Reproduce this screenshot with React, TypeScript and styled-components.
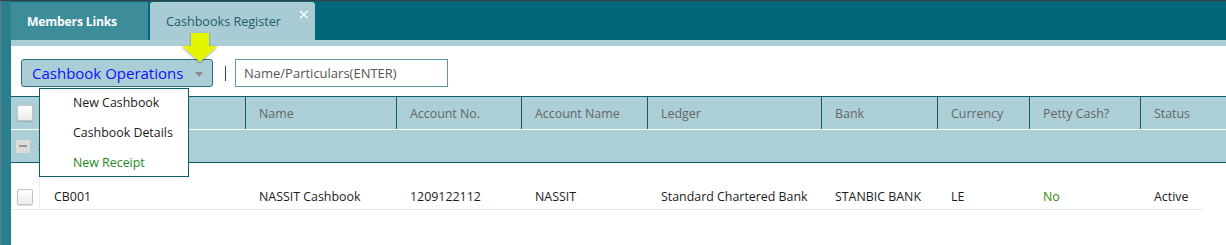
import React from "react";
import styled, { createGlobalStyle } from "styled-components";

const GlobalStyle = createGlobalStyle`
  html, body {
    margin: 0;
    padding: 0;
    background: #ffffff;
    font-family: "Open Sans", "Liberation Sans", sans-serif;
    overflow: hidden;
  }
`;

const COLS = "29px 205px 151px 125px 126px 174px 116px 92px 111px 1fr";

const Page = styled.div`
  width: 1226px;
  height: 245px;
  border-top: 1px solid #3b3f40;
  box-sizing: border-box;
  display: flex;
`;

const Rail = styled.div`
  width: 11px;
  flex: none;
  background: #2a7f8e;
  border-left: 1px solid #5f7f85;
  box-sizing: border-box;
`;

const Main = styled.div`
  flex: 1;
  display: flex;
  flex-direction: column;
  min-width: 0;
`;

const TabBar = styled.div`
  height: 39px;
  background: #02677a;
  display: flex;
  align-items: flex-end;
  gap: 2px;
`;

const Tab = styled.div<{ active?: boolean }>`
  position: relative;
  height: 38px;
  box-sizing: border-box;
  width: ${(p) => (p.active ? "165px" : "137px")};
  display: flex;
  align-items: center;
  padding-left: 16px;
  border-radius: ${(p) => (p.active ? "3px 3px 0 0" : "0")};
  background: ${(p) => (p.active ? "#a9cbd3" : "#3d8c99")};
  color: ${(p) => (p.active ? "#1d5f6d" : "#ffffff")};
  font-weight: ${(p) => (p.active ? 400 : 700)};
  font-size: ${(p) => (p.active ? "12.6px" : "12.2px")};
  letter-spacing: ${(p) => (p.active ? "0" : "-0.2px")};
`;

const Close = styled.span`
  position: absolute;
  right: 6px;
  top: 3px;
  color: #ffffff;
  font-size: 19px;
  line-height: 19px;
`;

const Strip = styled.div`
  height: 6px;
  background: #abcdd5;
`;

const Content = styled.div`
  flex: 1;
  background: #ffffff;
`;

const Toolbar = styled.div`
  display: flex;
  align-items: center;
  padding: 13px 0 0 10px;
  height: 28px;
`;

const OpsWrap = styled.div`
  position: relative;
`;

const OpsButton = styled.div`
  width: 192px;
  height: 28px;
  box-sizing: border-box;
  border: 1px solid #2a6f7e;
  border-radius: 3px;
  background: #abcdd6;
  display: flex;
  align-items: center;
  justify-content: space-between;
  padding: 0 9px 0 10px;
  color: #1010ff;
  font-size: 15px;
`;

const Caret = styled.span`
  width: 0;
  height: 0;
  border-left: 4px solid transparent;
  border-right: 4px solid transparent;
  border-top: 5px solid #8a8a8a;
  margin-top: 2px;
`;

const Pointer = styled.svg`
  position: absolute;
  left: 159px;
  top: -28px;
  z-index: 3;
`;

const Menu = styled.div`
  position: absolute;
  left: 18px;
  top: 29px;
  width: 150px;
  height: 89px;
  box-sizing: border-box;
  border: 1px solid #0e5b69;
  background: #ffffff;
  z-index: 2;
  overflow: hidden;
`;

const MenuItem = styled.div<{ accent?: boolean }>`
  height: 30px;
  line-height: 28px;
  padding-left: 33px;
  font-size: 12.4px;
  color: ${(p) => (p.accent ? "#1c8a22" : "#1b1b1b")};
`;

const Divider = styled.div`
  width: 1px;
  height: 15px;
  background: #2b4a50;
  margin: 0 9px 0 12px;
`;

const Search = styled.div`
  width: 213px;
  height: 28px;
  box-sizing: border-box;
  border: 1px solid #5b9aa5;
  display: flex;
  align-items: center;
  padding-left: 8px;
  color: #555555;
  font-size: 13px;
`;

const Grid = styled.div`
  margin-top: 9px;
`;

const HeadRow = styled.div`
  display: grid;
  grid-template-columns: ${COLS};
  height: 34px;
  box-sizing: border-box;
  background: #acced6;
  border-top: 1px solid #0e5b69;
  border-bottom: 1px solid #ffffff;
`;

const HeadCell = styled.div<{ first?: boolean }>`
  display: flex;
  align-items: center;
  padding-left: ${(p) => (p.first ? "6px" : "13px")};
  border-left: ${(p) => (p.first ? "none" : "1px solid #0e5b69")};
  color: #666666;
  font-size: 12.4px;
`;

const GroupRow = styled.div`
  height: 33px;
  box-sizing: border-box;
  background: #acced6;
  border-bottom: 1px solid #0e5b69;
  display: flex;
  align-items: center;
  padding-left: 5px;
  gap: 8px;
  font-size: 12.4px;
  color: #444444;
`;

const Minus = styled.span`
  width: 14px;
  height: 13px;
  background: #dcdcdc;
  display: flex;
  align-items: center;
  justify-content: center;
  &::after {
    content: "";
    width: 8px;
    height: 2px;
    background: #9a9a9a;
  }
`;

const DataRow = styled.div`
  display: grid;
  grid-template-columns: ${COLS};
  width: 1192px;
  height: 47px;
  box-sizing: border-box;
  border-bottom: 1px solid #e6e6e6;
`;

const Cell = styled.div<{ first?: boolean; tone?: string }>`
  display: flex;
  align-items: center;
  padding: 21px 0 0 ${(p) => (p.first ? "6px" : "14px")};
  border-right: ${(p) => (p.first ? "1px solid #ececec" : "none")};
  color: ${(p) => p.tone || "#1b1b1b"};
  font-size: 12.4px;
  white-space: nowrap;
`;

const Check = styled.span`
  width: 16px;
  height: 16px;
  box-sizing: border-box;
  border: 1px solid #c4c4c4;
  border-radius: 2px;
  background: linear-gradient(#ffffff, #ececec);
  box-shadow: 0 1px 1px rgba(0, 0, 0, 0.15);
`;

const headers = [
  "",
  "",
  "Name",
  "Account No.",
  "Account Name",
  "Ledger",
  "Bank",
  "Currency",
  "Petty Cash?",
  "Status",
];

const row = {
  code: "CB001",
  name: "NASSIT Cashbook",
  accountNo: "1209122112",
  accountName: "NASSIT",
  ledger: "Standard Chartered Bank",
  bank: "STANBIC BANK",
  currency: "LE",
  petty: "No",
  status: "Active",
};

export default function App() {
  return (
    <>
      <GlobalStyle />
      <Page>
        <Rail />
        <Main>
          <TabBar>
            <Tab>Members Links</Tab>
            <Tab active>
              Cashbooks Register
              <Close>×</Close>
            </Tab>
          </TabBar>
          <Strip />
          <Content>
            <Toolbar>
              <OpsWrap>
                <OpsButton>
                  Cashbook Operations
                  <Caret />
                </OpsButton>
                <Pointer width="40" height="34" viewBox="0 0 40 34">
                  <defs>
                    <filter id="sh" x="-30%" y="-30%" width="160%" height="160%">
                      <feGaussianBlur in="SourceAlpha" stdDeviation="1.2" />
                      <feOffset dx="0" dy="1" result="b" />
                      <feComponentTransfer>
                        <feFuncA type="linear" slope="0.45" />
                      </feComponentTransfer>
                      <feMerge>
                        <feMergeNode />
                        <feMergeNode in="SourceGraphic" />
                      </feMerge>
                    </filter>
                  </defs>
                  <polygon
                    points="11,2 29,2 29,15 37,15 20,31 2,15 11,15"
                    fill="#e4f500"
                    filter="url(#sh)"
                  />
                </Pointer>
                <Menu>
                  <MenuItem>New Cashbook</MenuItem>
                  <MenuItem>Cashbook Details</MenuItem>
                  <MenuItem accent>New Receipt</MenuItem>
                </Menu>
              </OpsWrap>
              <Divider />
              <Search>Name/Particulars(ENTER)</Search>
            </Toolbar>
            <Grid>
              <HeadRow>
                {headers.map((h, i) => (
                  <HeadCell key={i} first={i === 0}>
                    {i === 0 ? <Check /> : h}
                  </HeadCell>
                ))}
              </HeadRow>
              <GroupRow>
                <Minus />
                Standard Chartered (1)
              </GroupRow>
              <DataRow>
                <Cell first>
                  <Check />
                </Cell>
                <Cell>{row.code}</Cell>
                <Cell>{row.name}</Cell>
                <Cell>{row.accountNo}</Cell>
                <Cell>{row.accountName}</Cell>
                <Cell>{row.ledger}</Cell>
                <Cell>{row.bank}</Cell>
                <Cell>{row.currency}</Cell>
                <Cell tone="#2f8a06">{row.petty}</Cell>
                <Cell>{row.status}</Cell>
              </DataRow>
            </Grid>
          </Content>
        </Main>
      </Page>
    </>
  );
}
